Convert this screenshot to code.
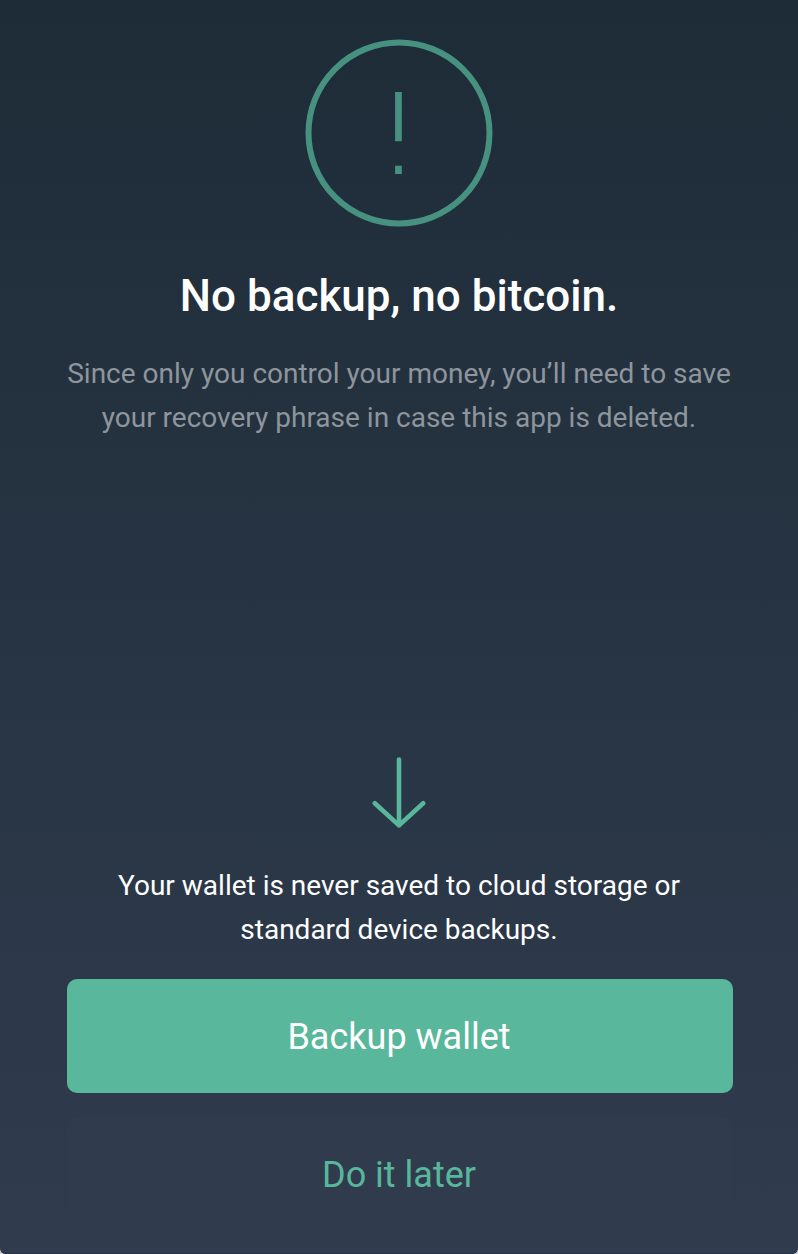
<main class="screen">
  <svg class="alert" width="188" height="188" viewBox="0 0 188 188" aria-hidden="true">
    <circle cx="94" cy="94" r="90.5" />
    <path d="M90.1 53h6.7v49.2h-6.7zM90.1 126.7h6.7v8.3h-6.7z" />
  </svg>
  <h1>No backup, no bitcoin.</h1>
  <p class="intro">Since only you control your money, you’ll need to save<br />your recovery phrase in case this app is deleted.</p>
  <div class="bottom">
    <svg class="arrow" width="54" height="72" viewBox="0 0 54 72" aria-hidden="true">
      <path d="M27 2.6v65.8M2.8 46.2L27 68.4l24.2-22.2" />
    </svg>
    <p class="warning">Your wallet is never saved to cloud storage or<br />standard device backups.</p>
    <button class="primary">Backup wallet</button>
    <button class="secondary">Do it later</button>
  </div>
</main>

<style>
  :global(body) { margin: 0; background: #c9cbce; }
  .screen {
    box-sizing: border-box;
    height: 1254px;
    padding: 39px 66px 23px;
    display: flex;
    flex-direction: column;
    align-items: center;
    background: linear-gradient(#1e2c38, #303c4e);
    border-radius: 0 0 6px 6px;
    box-shadow: inset 0 -1px #293249;
    font-family: Roboto, sans-serif;
    text-align: center;
    overflow: hidden;
  }
  svg { display: block; fill: none; flex: none; }
  .alert circle { stroke: #469180; stroke-width: 6; }
  .alert path { fill: #469180; }
  h1 {
    margin: 39px 0 0;
    font-size: 44px;
    line-height: 60px;
    font-weight: 500;
    color: #fff;
    white-space: nowrap;
  }
  p { margin: 0; font-size: 28px; line-height: 44px; white-space: nowrap; }
  .intro { margin-top: 26px; color: #8e959c; }
  .bottom { width: 100%; margin-top: auto; display: flex; flex-direction: column; align-items: center; }
  .arrow path { stroke: #58b79b; stroke-width: 4.6; stroke-linecap: round; stroke-linejoin: round; }
  .warning { margin-top: 35px; color: #fff; }
  button {
    width: 666px;
    height: 114px;
    margin-left: 1px;
    align-self: flex-start;
    padding: 2px 2px 0 0;
    border: 0;
    border-radius: 10px;
    font: 400 36px Roboto, sans-serif;
  }
  .primary { margin-top: 27px; background: #59b79c; color: #fff; }
  .secondary { margin-top: 24px; background: #303c4d; color: #58b79b; }
</style>
